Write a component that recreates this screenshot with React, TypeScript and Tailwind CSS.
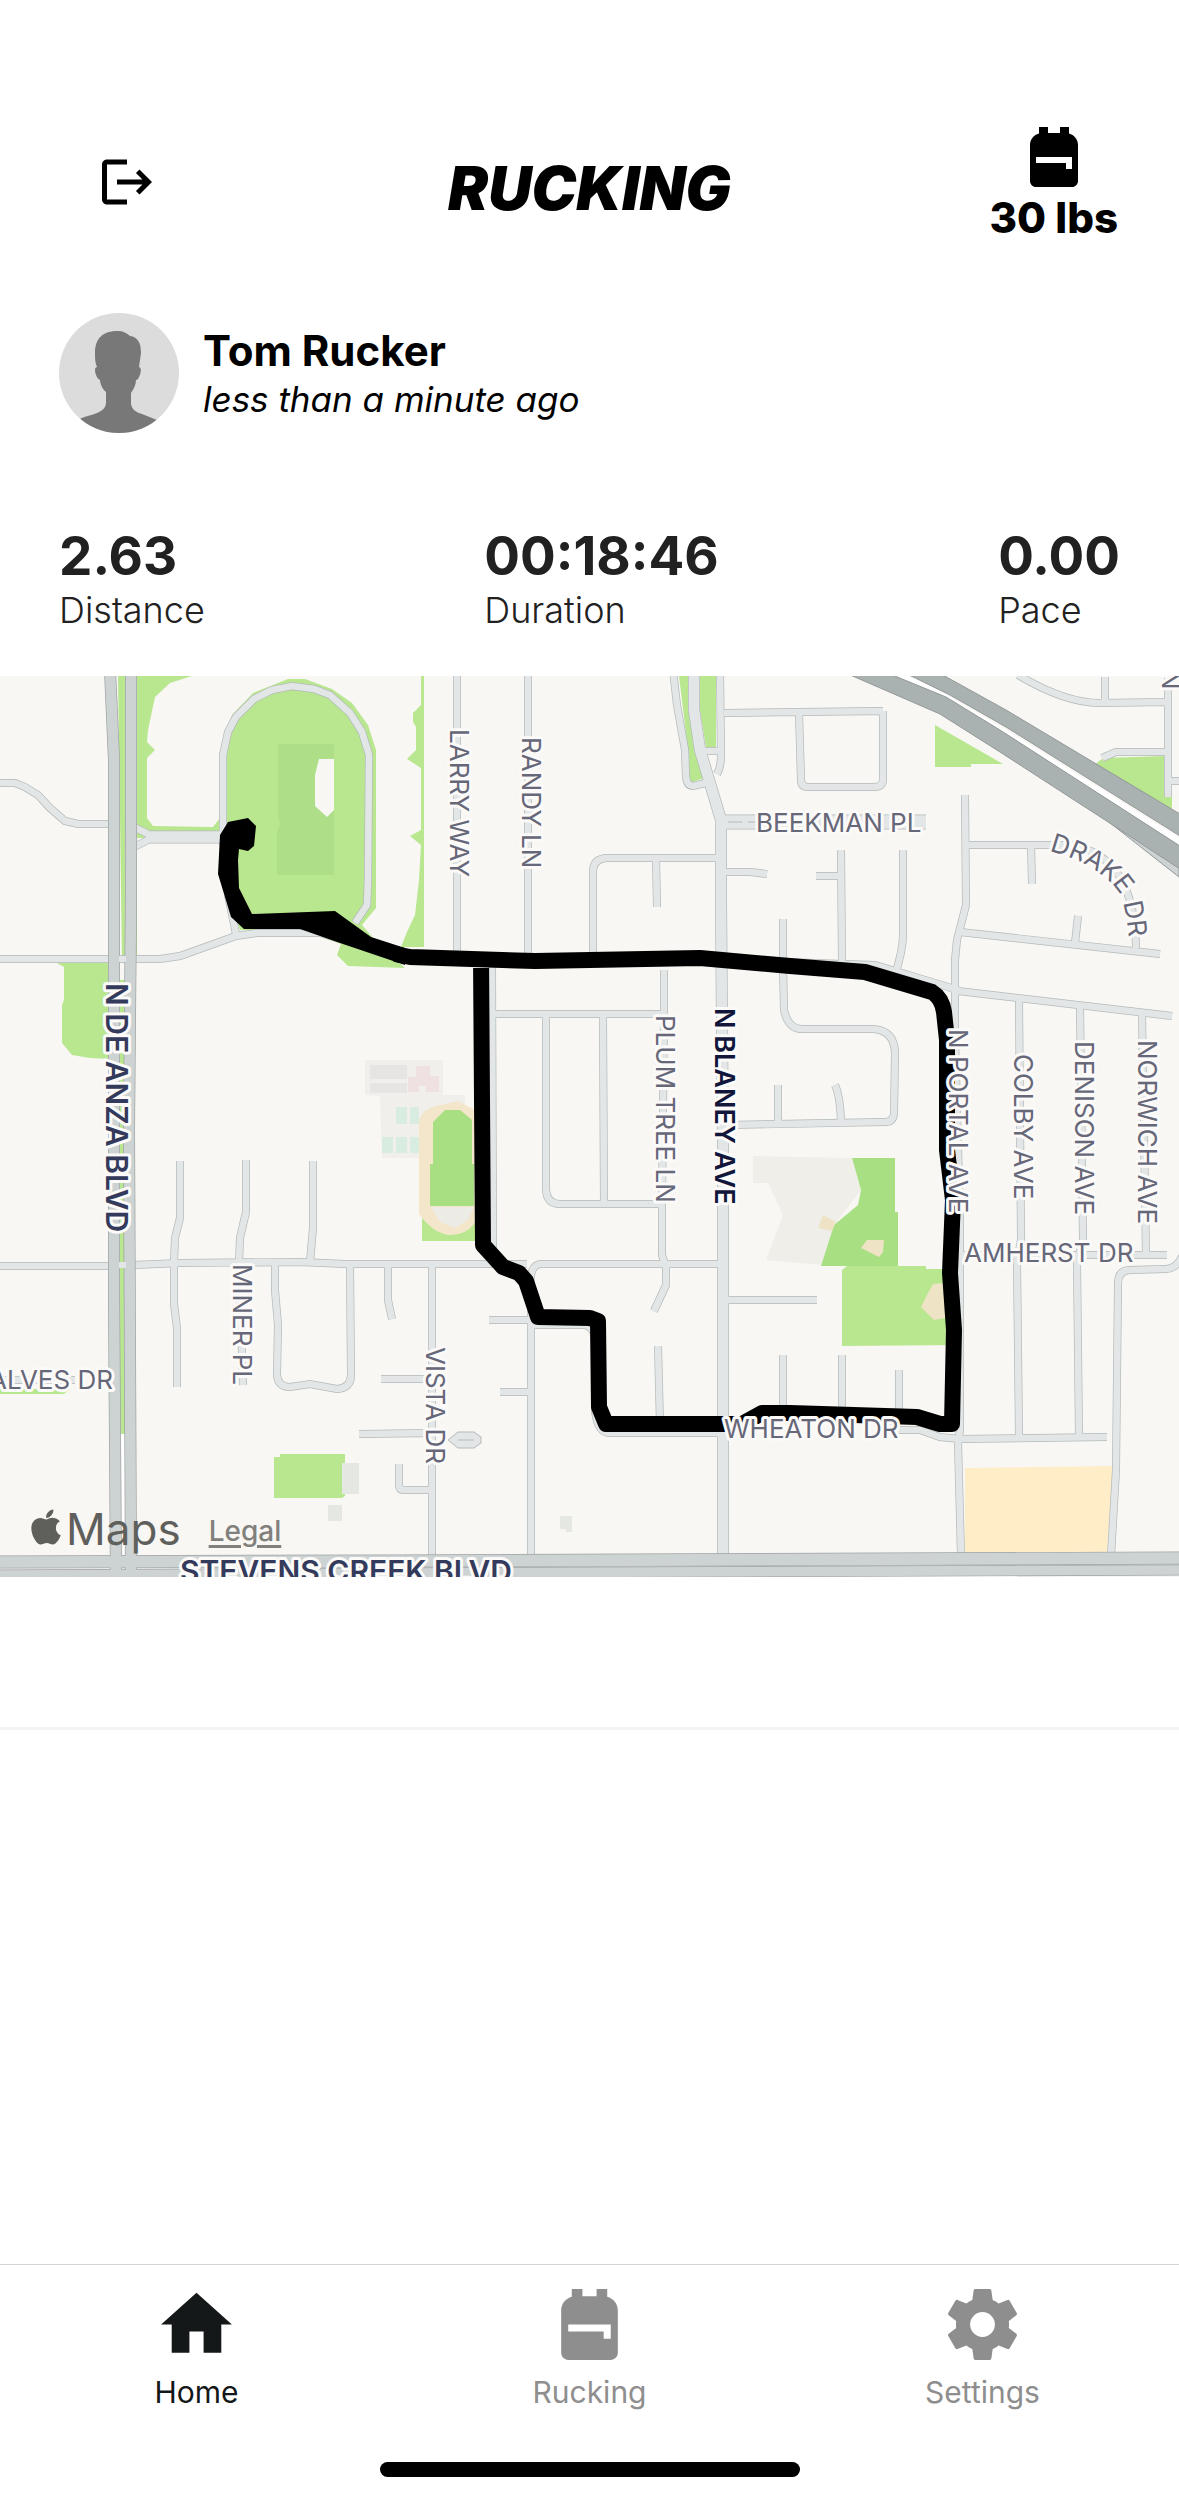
import { FaApple } from 'react-icons/fa'
import { MdBackpack, MdHome } from 'react-icons/md'

type Road = { d: string; w?: number }

const localRoads: Road[] = [
  { d: 'M0 783H15L25 787L38 795L50 808L65 821L78 824H112' },
  { d: 'M134 827L148 834' },
  { d: 'M134 847L148 840' },
  { d: 'M146 837H223', w: 13 },
  { d: 'M228 895L236 934M223 845V755L228 732L236 717L254 699L272 690L292 686L314 689L330 695L350 713L362 732L369 755L368 880L367 905L355 923' },
  { d: 'M0 959H160L180 956L236 936L257 933H320L390 953L528 958L700 955L783 962L875 965L945 986L960 991' },
  { d: 'M457 670V955' },
  { d: 'M528 670V955' },
  { d: 'M673 670L677 705L685 750L686 777Q687 786 693 786L706 783' },
  { d: 'M720 670L721 755Q721 767 717 774M703 751H720' },
  { d: 'M724 713L799 712L883 711M799 713L801 780Q801 787 808 787H874Q883 787 883 779V711' },
  { d: 'M722 822H926', w: 15 },
  { d: 'M724 872H750L767 874' },
  { d: 'M593 955V872Q593 858 608 858H720M656 858L657 907' },
  { d: 'M783 919V965L784 1010Q788 1029 802 1029H874Q895 1031 895 1054L894 1114Q893 1122 885 1122L728 1125' },
  { d: 'M778 1085V1122' },
  { d: 'M835 1085Q840 1095 841 1122' },
  { d: 'M841 850L842 965M816 876H840' },
  { d: 'M903 850V935Q903 950 895 975' },
  { d: 'M492 965L493 1255M493 1014H664V970' },
  { d: 'M546 1014V1190Q547 1204 560 1204H662M603 1014L604 1204' },
  { d: 'M664 1014L662 1204V1255L666 1267V1285L654 1311' },
  { d: 'M0 1266H112M134 1265L180 1263L300 1262L345 1264H527' },
  { d: 'M531 1290Q528 1264 542 1264H720' },
  { d: 'M531 1285V1556M489 1320H530M500 1392H530M531 1325H585Q594 1327 595 1340V1410Q597 1433 610 1433H720' },
  { d: 'M658 1346L660 1424' },
  { d: 'M724 1300H817' },
  { d: 'M783 1355V1412M842 1355V1412M899 1370V1415' },
  { d: 'M432 1264V1556M381 1379H432M359 1434L432 1433M399 1464V1485Q399 1490 404 1490H432' },
  { d: 'M180 1161V1218L175 1238L174 1262V1304L177 1328V1387' },
  { d: 'M246 1160V1212L240 1238L239 1262L243 1385' },
  { d: 'M313 1161V1228L310 1262' },
  { d: 'M275 1264V1290L278 1325L277 1375Q278 1387 290 1387L310 1384L337 1389Q351 1388 351 1375L350 1264' },
  { d: 'M388 1266V1300L392 1319' },
  { d: 'M0 1380H75' },
  { d: 'M1018 675Q1065 703 1100 703L1168 702M1105 677V702M1168 670V797M1102 758L1116 752H1168M1170 781H1179' },
  { d: 'M965 795L966 905L957 940L955 960V1035L960 1220V1430L958 1442L961 1556' },
  { d: 'M966 845H1070Q1135 855 1136 948M1031 845L1032 884' },
  { d: 'M960 932L1160 954M1078 916L1075 943' },
  { d: 'M958 991L1172 1016' },
  { d: 'M1019 999L1021 1240L1017 1262L1019 1437' },
  { d: 'M1080 1006L1083 1240L1077 1262L1079 1437' },
  { d: 'M1142 1013L1146 1255' },
  { d: 'M960 1255H1167' },
  { d: 'M1185 1250Q1178 1269 1166 1269L1130 1270Q1118 1270 1118 1284L1116 1470L1111 1556' },
  { d: 'M890 1430H920L940 1437L960 1439L1107 1437' },
  { d: 'M694 670V710L700 750L721 820V900L723 1150L723 1556', w: 12 },
]

const mainRoads: Road[] = [
  { d: 'M110 670L114 760V1300L116 1580', w: 12 },
  { d: 'M131 670V900L129 1130L131 1580', w: 12 },
  { d: 'M0 1562L400 1561L1179 1558', w: 13 },
  { d: 'M0 1575L400 1573L1179 1570', w: 11 },
]

// x/y is the start of the baseline, vertical names run top to bottom
const streets = [
  { name: 'LARRY WAY', x: 450, y: 729, vertical: true },
  { name: 'RANDY LN', x: 522, y: 737, vertical: true },
  { name: 'BEEKMAN PL', x: 756, y: 832 },
  { name: 'PLUM TREE LN', x: 656, y: 1015, vertical: true },
  { name: 'N PORTAL AVE', x: 949, y: 1029, vertical: true },
  { name: 'COLBY AVE', x: 1014, y: 1054, vertical: true },
  { name: 'DENISON AVE', x: 1075, y: 1041, vertical: true },
  { name: 'NORWICH AVE', x: 1138, y: 1040, vertical: true },
  { name: 'MINER PL', x: 233, y: 1264, vertical: true },
  { name: 'VISTA DR', x: 426, y: 1347, vertical: true },
  { name: 'AMHERST DR', x: 964, y: 1262 },
  { name: 'WHEATON DR', x: 724, y: 1438 },
  { name: 'ALVES DR', x: -11, y: 1389 },
  { name: 'N', x: 1162, y: 670, vertical: true },
]

const stats = [
  { label: 'Distance', value: '2.63' },
  { label: 'Duration', value: '00:18:46' },
  { label: 'Pace', value: '0.00' },
]

function LogoutIcon() {
  return (
    <svg viewBox="0 0 24 24" className="size-15" fill="currentColor" aria-hidden="true">
      <path d="m17 7-1.41 1.41L18.17 11H8v2h10.17l-2.58 2.58L17 17l5-5zM4 5h8V3H4c-1.1 0-2 .9-2 2v14c0 1.1.9 2 2 2h8v-2H4z" />
    </svg>
  )
}

function CogIcon() {
  return (
    <svg viewBox="0 0 24 24" className="size-[85px]" fill="currentColor" aria-hidden="true">
      <path d="M12,15.5A3.5,3.5 0 0,1 8.5,12A3.5,3.5 0 0,1 12,8.5A3.5,3.5 0 0,1 15.5,12A3.5,3.5 0 0,1 12,15.5M19.43,12.97C19.47,12.65 19.5,12.33 19.5,12C19.5,11.67 19.47,11.34 19.43,11L21.54,9.37C21.73,9.22 21.78,8.95 21.66,8.73L19.66,5.27C19.54,5.05 19.27,4.96 19.05,5.05L16.56,6.05C16.04,5.66 15.5,5.32 14.87,5.07L14.5,2.42C14.46,2.18 14.25,2 14,2H10C9.75,2 9.54,2.18 9.5,2.42L9.13,5.07C8.5,5.32 7.96,5.66 7.44,6.05L4.95,5.05C4.73,4.96 4.46,5.05 4.34,5.27L2.34,8.73C2.21,8.95 2.27,9.22 2.46,9.37L4.57,11C4.53,11.34 4.5,11.67 4.5,12C4.5,12.33 4.53,12.65 4.57,12.97L2.46,14.63C2.27,14.78 2.21,15.05 2.34,15.27L4.34,18.73C4.46,18.95 4.73,19.03 4.95,18.95L7.44,17.94C7.96,18.34 8.5,18.68 9.13,18.93L9.5,21.58C9.54,21.82 9.75,22 10,22H14C14.25,22 14.46,21.82 14.5,21.58L14.87,18.93C15.5,18.67 16.04,18.34 16.56,17.94L19.05,18.95C19.27,19.03 19.54,18.95 19.66,18.73L21.66,15.27C21.78,15.05 21.73,14.78 21.54,14.63L19.43,12.97Z" />
    </svg>
  )
}

function Avatar() {
  return (
    <svg viewBox="0 0 120 120" className="size-30 rounded-full" role="img" aria-label="Tom Rucker">
      <rect width="120" height="120" fill="#dcdcdc" />
      <path
        fill="#787878"
        d="M36 40C36 25 44 18 59 18C64 18 68 20 71 23C79 24 82 30 82 40L80 54C83 55 82 60 80 64C79 67 77 67 77 67C77 71 75 76 72 80V91C73 97 77 99 83 101L98 107L108 120H12L21 106C31 101 46 101 47 90V79C43 76 41 70 41 67C38 66 36 60 36 57C36 55 37 54 38 54C36 50 36 45 36 40Z"
      />
    </svg>
  )
}

function RouteMap() {
  return (
    <div className="relative aspect-[1179/901] w-full overflow-hidden">
      <svg viewBox="0 676 1179 901" className="size-full font-[Inter,sans-serif]" role="img" aria-label="Route map">
        <rect y="676" width="1179" height="901" fill="#f8f7f3" />

        {/* parks */}
        <g fill="#b9e78f">
          <path d="M118 676H192L170 683L155 697L148 730L147 742L155 750L147 758V818L153 826L213 827L220 818L222 838H137V960H122Z" />
          <path d="M232 715L253 693L288 679H305L332 689L352 703L368 725L376 750V908L362 925L375 940L405 968L348 966L337 955L341 944L300 930H240L223 880V745Z" />
          <path d="M421 676H424V947H401L407 932L415 915L419 880L421 845L410 836L421 830V768L407 759L416 750V727L413 722V713L421 705Z" />
          <path d="M57 963H112V1059L90 1058L72 1055L62 1043V1005L64 1000V967Z" />
          <path d="M119 980H126V1434H119Z" />
          <path d="M679 676H690V720L704 778L690 783L688 750Z" />
          <path d="M699 676H716V747H706L700 710Z" />
          <path d="M935 725L1003 764H971V767H935Z" />
          <path d="M1093 766L1103 758L1165 756L1166 797H1172V811L1118 783Z" />
          <path d="M422 1215V1241H475V1215Z" />
          <path d="M842 1270L847 1266H926V1269H945L962 1300V1345L842 1346Z" />
          <path d="M0 1389H70L64 1394H0Z" />
          <path d="M280 1454H345V1496L342 1498H274V1457H280Z" />
        </g>
        <path fill="#f8f7f3" d="M137 845H219V880L232 928L180 952H137Z" />
        <path fill="#afde88" d="M278 744H334V875H277V832L280 825L278 815Z" />
        <path fill="#f8f7f3" d="M319 759H334V810L327 817L315 806V775Z" />
        <path fill="#fff" d="M121 1434H126V1554H123Z" />

        {/* schools, courts and running track */}
        <path fill="#f0efec" d="M365 1060H443V1095H465V1158H382L380 1096L365 1095Z" />
        <path fill="#e7e5e4" d="M370 1065H407V1079H370ZM370 1083H407V1093H370Z" />
        <path fill="#efe0e1" d="M416 1066H430V1076H439V1092H426V1086H419V1092H408V1077H416Z" />
        <path fill="#d8ece0" d="M396 1107H407V1124H396ZM410 1107H419V1124H410ZM382 1137H393V1153H382ZM396 1137H407V1153H396ZM410 1137H419V1153H410Z" />
        <path fill="#f3e6cb" d="M419 1120Q424 1108 436 1106L458 1101L475 1110V1222Q468 1235 448 1235Q432 1232 419 1214Z" />
        <path fill="#a8df83" d="M445 1110H460L472 1120V1164H474V1206H430V1164H433V1122Z" />
        <path fill="#ecebe6" d="M431 1207H474L468 1220L455 1228L440 1222Z" />
        <path fill="#efeee9" d="M753 1156L852 1158L861 1190L834 1225L822 1265L766 1260L783 1215L768 1183H753Z" />
        <path fill="#a8df83" d="M852 1158H895V1212H898V1266H821L834 1225L858 1205L861 1190L856 1172Z" />
        <path fill="#eee4c5" d="M933 1284L945 1283V1318L934 1320L921 1307L927 1295ZM867 1240H884L883 1252L879 1257L861 1248ZM823 1215L836 1222L832 1231L818 1228Z" />
        <path fill="#ffedc8" d="M965 1468L1040 1467L1113 1466L1107 1553H965Z" />
        <path fill="#e5e7e3" d="M342 1463H359V1494H342ZM328 1505H342V1521H328ZM560 1516H572V1532H566V1529H560Z" />

        {/* roads, casing below surface */}
        <g fill="none" stroke="#b4b9ba">
          {localRoads.map((road) => (
            <path key={road.d} d={road.d} strokeWidth={road.w ?? 8} />
          ))}
        </g>
        <g fill="none" stroke="#e2e6e6">
          {localRoads.map((road) => (
            <path key={road.d} d={road.d} strokeWidth={(road.w ?? 8) - 1.4} />
          ))}
        </g>
        <path d="M728 822H742M748 822H756" stroke="#b4b9ba" />
        <path d="M448 1440L458 1432H474L481 1437V1443L474 1448H458Z" fill="#e2e6e6" stroke="#b4b9ba" />
        <path d="M458 1440H474" stroke="#b4b9ba" />
        <g fill="none" stroke="#9da2a3">
          {mainRoads.map((road) => (
            <path key={road.d} d={road.d} strokeWidth={road.w} />
          ))}
        </g>
        <g fill="none" stroke="#cdd2d3">
          {mainRoads.map((road) => (
            <path key={road.d} d={road.d} strokeWidth={(road.w ?? 12) - 1.4} />
          ))}
        </g>
        <path d="M119 959H126M119 1265H126" stroke="#e2e6e6" strokeWidth="6" />

        {/* highway */}
        <g stroke="#929899">
          <path fill="#cdd2d3" d="M1100 815L1179 866V877ZM1110 780L1130 785L1179 815Z" />
          <path fill="#fff" stroke="none" d="M890 674H910L1006 730L1179 838V846L1000 733Z" />
          <path fill="#aab2b1" d="M848 674L890 674L946 697L1000 730L1180 846V869L1105 820L1000 752L940 714Z" />
          <path fill="#aab2b1" d="M907 674H941L1006 710L1180 814V836L1006 727L950 695Z" />
        </g>

        {/* recorded route */}
        <path d="M220 835L228 822L248 818L256 826L254 846L248 851L239 849L238 860L239 888L252 914L335 911L371 937L405 948V965L340 943L300 929H244L231 917L218 874Z" />
        <path
          d="M395 954L410 957L535 961L700 958L790 966L865 972L932 992Q942 998 944 1012L947 1040V1150L953 1200L950 1273L954 1330L952 1424H940L917 1417L790 1413H762L742 1424H606L599 1407L598 1321L590 1318L538 1317L526 1281L519 1273L503 1267L483 1245L481 955"
          fill="none"
          stroke="#000"
          strokeWidth="16"
          strokeLinejoin="round"
        />

        {/* street names */}
        <g fill="#666779" stroke="#fbfaf8" strokeWidth="6" strokeLinejoin="round" paintOrder="stroke" fontSize="26">
          {streets.map((street) => (
            <text key={street.name} transform={`translate(${street.x} ${street.y}) rotate(${street.vertical ? 90 : 0})`}>
              {street.name}
            </text>
          ))}
          <path id="drake" d="M1049 851Q1092 862 1115 887Q1128 900 1130 960" fill="none" stroke="none" />
          <text>
            <textPath href="#drake">DRAKE DR</textPath>
          </text>
          <text fill="#12163a" fontWeight="600" fontSize="27" transform="translate(715 1008) rotate(90)">
            N BLANEY AVE
          </text>
          <g fill="#333a5c" fontWeight="600" fontSize="30">
            <text transform="translate(106 983) rotate(90)">N DE ANZA BLVD</text>
            <text x="180" y="1582">STEVENS CREEK BLVD</text>
          </g>
        </g>
      </svg>
      <div className="absolute bottom-5 left-[26px] flex items-center text-[#5f5f5c]">
        <FaApple className="mb-1 size-10" aria-hidden="true" />
        <span className="text-[44px] leading-14">Maps</span>
        <a href="#legal" className="mt-1 ml-7 text-[28px] font-medium text-[#80807d] underline decoration-3 underline-offset-4">
          Legal
        </a>
      </div>
    </div>
  )
}

export default function App() {
  return (
    <div className="flex min-h-screen flex-col bg-white font-[Inter,sans-serif] text-black">
      <header className="grid grid-cols-3 items-center px-[61px] pt-[121px]">
        <button type="button" aria-label="Log out" className="ml-9 justify-self-start">
          <LogoutIcon />
        </button>
        <h1 className="pt-3 text-center text-[60px] leading-none font-black italic">RUCKING</h1>
        <div className="flex flex-col items-center justify-self-end">
          <MdBackpack className="size-18" aria-hidden="true" />
          <span className="text-[42px] leading-[50px] font-extrabold">30 lbs</span>
        </div>
      </header>

      <main className="grow">
        <article className="border-b-3 border-[#f3f3f3] pb-[150px]">
          <div className="mt-[70px] flex items-center gap-6 px-[59px]">
            <Avatar />
            <div className="pt-1">
              <h2 className="text-[42px] leading-12 font-bold">Tom Rucker</h2>
              <p className="text-[35px] leading-12 italic">less than a minute ago</p>
            </div>
          </div>

          <dl className="mt-[93px] mb-[42px] flex justify-between px-[59px] text-[#212121]">
            {stats.map((stat) => (
              <div key={stat.label} className="flex flex-col-reverse">
                <dt className="text-4xl leading-12 font-light">{stat.label}</dt>
                <dd className="text-[53px] leading-[60px] font-bold">{stat.value}</dd>
              </div>
            ))}
          </dl>

          <RouteMap />
        </article>
      </main>

      <nav className="border-t border-[#d4d4d4]">
        <div className="grid grid-cols-3 pt-[17px] text-3xl text-[#8e8e8e]">
          <a href="#home" aria-current="page" className="flex flex-col items-center text-[#141818]">
            <MdHome className="size-[85px]" aria-hidden="true" />
            <span className="leading-[50px]">Home</span>
          </a>
          <a href="#rucking" className="flex flex-col items-center">
            <MdBackpack className="size-[85px]" aria-hidden="true" />
            <span className="leading-[50px]">Rucking</span>
          </a>
          <a href="#settings" className="flex flex-col items-center">
            <CogIcon />
            <span className="leading-[50px]">Settings</span>
          </a>
        </div>
        <div className="mx-auto mt-[45px] mb-6 h-[15px] w-[420px] rounded-full bg-black" />
      </nav>
    </div>
  )
}
